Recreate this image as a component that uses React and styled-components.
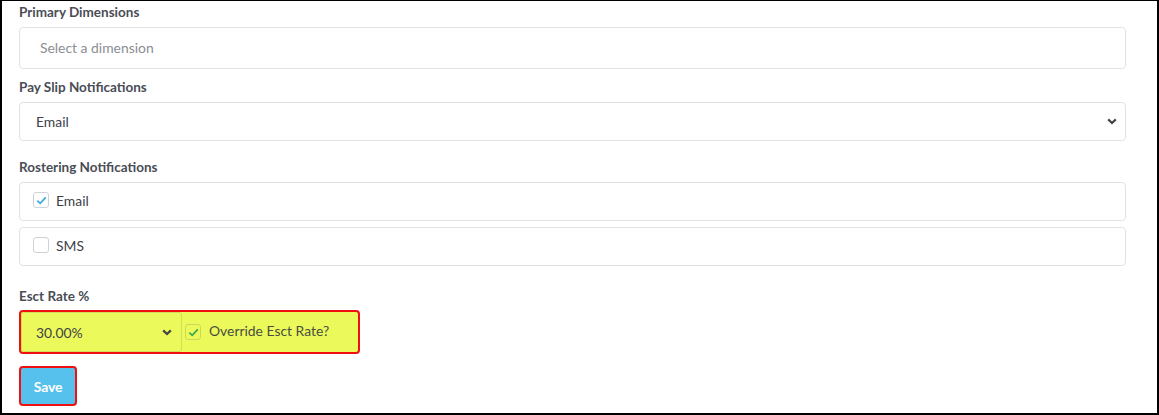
import React from "react";
import styled, { createGlobalStyle } from "styled-components";

const GlobalStyle = createGlobalStyle`
  html, body { margin: 0; padding: 0; background: #fff; }
  body { font-family: Lato, "Open Sans", Arial, sans-serif; }
  * { box-sizing: border-box; }
`;

const Frame = styled.div`
  width: 1159px;
  height: 415px;
  border-top: 1px solid #000;
  border-left: 2px solid #000;
  border-right: 2px solid #000;
  border-bottom: 2px solid #000;
  padding: 2px 31px 0 17px;
  display: flex;
  flex-direction: column;
  overflow: hidden;
`;

const Label = styled.div`
  font-size: 13.5px;
  font-weight: 700;
  color: #4a4d55;
  line-height: 18px;
  margin-top: ${(p) => p.$top || 0}px;
  margin-bottom: ${(p) => p.$bottom ?? 6}px;
`;

const Field = styled.div`
  height: ${(p) => p.$h || 39}px;
  border: 1px solid #dfe3e7;
  border-radius: 4px;
  background: #fff;
  display: flex;
  align-items: center;
  padding-left: ${(p) => p.$pl || 16}px;
  padding-right: 8px;
  padding-bottom: 1px;
  font-size: 13.9px;
  color: ${(p) => (p.$placeholder ? "#8a8d93" : "#3e4148")};
  margin-bottom: ${(p) => p.$bottom || 0}px;
`;

const Grow = styled.span`
  flex: 1;
`;

const CheckRow = styled(Field)`
  padding-left: 13px;
  padding-bottom: 3px;
  gap: 7px;
`;

const Box = styled.span`
  width: 16px;
  height: 16px;
  border: 1px solid ${(p) => p.$border || "#cfd3d8"};
  border-radius: 3px;
  background: ${(p) => p.$bg || "#fff"};
  display: inline-flex;
  align-items: center;
  justify-content: center;
  flex: none;
`;

const Highlight = styled.div`
  width: 341px;
  height: 44px;
  border: 2px solid #f01010;
  border-radius: 4px;
  background: #ebf95b;
  display: flex;
  align-items: center;
  gap: 3px;
`;

const RateSelect = styled.div`
  width: 161px;
  height: 40px;
  border: 1px solid #d3df5a;
  border-radius: 3px;
  display: flex;
  align-items: center;
  padding: 0 9px 0 14px;
  font-size: 13.9px;
  color: #3e4148;
`;

const OverrideLabel = styled.span`
  font-size: 13.9px;
  color: #4a4d40;
  margin-left: 5px;
  margin-top: -3px;
`;

const SaveButton = styled.button`
  margin-top: 12px;
  width: 58px;
  height: 40px;
  border: 2px solid #f01010;
  border-radius: 4px;
  background: #55c1ec;
  color: #fff;
  font-family: Lato, "Open Sans", Arial, sans-serif;
  font-weight: 700;
  font-size: 14px;
  padding: 0;
  letter-spacing: -0.2px;
`;

const Chevron = () => (
  <svg width="10" height="7" viewBox="0 0 10 7">
    <path d="M1.2 1.4 L5 5 L8.8 1.4" fill="none" stroke="#444" strokeWidth="2.2" />
  </svg>
);

const Check = ({ color }) => (
  <svg width="11" height="9" viewBox="0 0 11 9">
    <path d="M1.3 4.6 L4.2 7.3 L9.8 1.3" fill="none" stroke={color} strokeWidth="1.8" />
  </svg>
);

export default function App() {
  return (
    <>
      <GlobalStyle />
      <Frame>
        <Label>Primary Dimensions</Label>
        <Field $h={42} $pl={20} $placeholder>Select a dimension</Field>

        <Label $top={9}>Pay Slip Notifications</Label>
        <Field>
          <Grow>Email</Grow>
          <Chevron />
        </Field>

        <Label $top={17}>Rostering Notifications</Label>
        <CheckRow $bottom={6}>
          <Box>
            <Check color="#3fa9e6" />
          </Box>
          Email
        </CheckRow>
        <CheckRow>
          <Box />
          SMS
        </CheckRow>

        <Label $top={21} $bottom={5}>Esct Rate %</Label>
        <Highlight>
          <RateSelect>
            <Grow>30.00%</Grow>
            <Chevron />
          </RateSelect>
          <Box $border="#cbd85a" $bg="#ebf95b">
            <Check color="#3cab50" />
          </Box>
          <OverrideLabel>Override Esct Rate?</OverrideLabel>
        </Highlight>

        <SaveButton>Save</SaveButton>
      </Frame>
    </>
  );
}
